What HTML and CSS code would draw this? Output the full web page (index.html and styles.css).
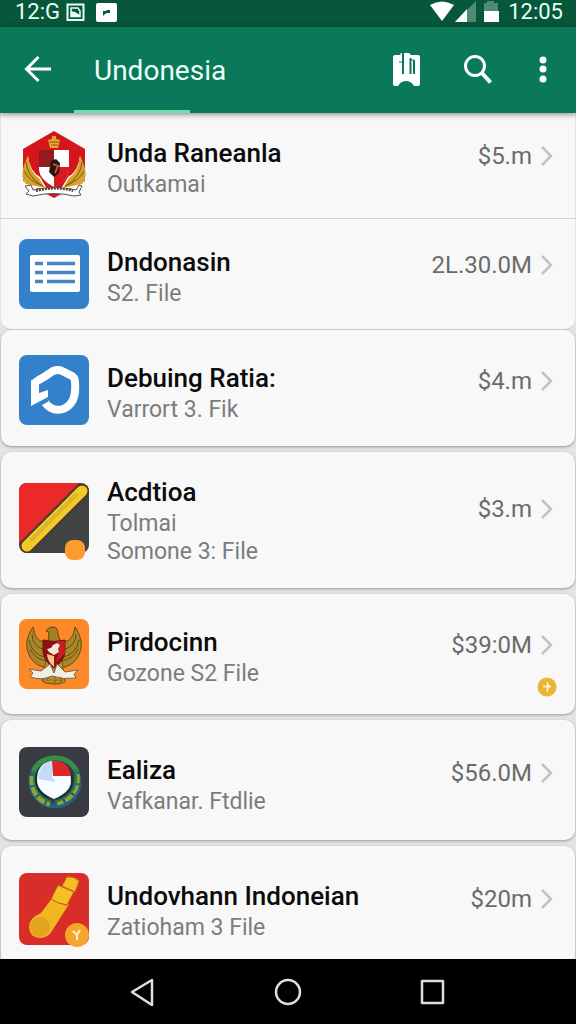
FILE: index.html
```html
<!DOCTYPE html>
<html lang="en">
<head>
    <meta charset="UTF-8">
    <meta name="viewport" content="width=device-width, initial-scale=1.0">
    <title>Undonesia</title>
    <link rel="stylesheet" href="styles.css">
</head>
<body>
    <div class="status-bar">
        <span>12:G</span>
        <svg class="note-icon" width="20" height="20" viewBox="0 0 20 20">
            <path d="M1.500 2.500h16v15.500h-16z" fill="none" stroke="#e9fff5" stroke-width="2"/>
            <path d="M5 14.500V6h7l2 3v5.500z" fill="none" stroke="#e9fff5" stroke-width="1.500"/>
            <path d="M5 9l4 1 5 3v2H5z" fill="#e9fff5"/>
        </svg>
        <svg width="22" height="20" viewBox="0 0 22 20">
            <rect x="0" y="1" width="21" height="19" rx="2" fill="#fff"/>
            <path d="M7 9h3l1-1h3v3h-3l-2 1-2 2z" fill="#07583c"/>
        </svg>
        <svg class="signal" width="70" height="21" viewBox="0 0 70 21">
            <path d="M0 4Q12-3 24 4L12 20z" fill="#fff"/>
            <path d="M46 0v21H25z" fill="#4d8b74"/>
            <path d="M37 8v13H25z" fill="#fff"/>
            <path d="M57 0h7v2h4v8H54V2h3z" fill="#4d8b74"/>
            <path d="M54 10h15v11H54z" fill="#fff"/>
        </svg>
        <span>12:05</span>
    </div>

    <header class="app-bar">
        <button class="icon-button" aria-label="Back">
            <svg width="28" height="28" viewBox="0 0 28 28" fill="none" stroke="#fff" stroke-width="3">
                <path d="M27 13H3M14.500 1L2.500 13l12 12"/>
            </svg>
        </button>
        <h1>Undonesia</h1>
        <button class="icon-button" aria-label="Guide">
            <svg width="28" height="34" viewBox="0 0 28 34">
                <path d="M0 4q0-2 2-2h5l1-2h8l2 2h7q2 0 2 2v27q0 2-2 2h-4q-3-5-8-5t-8 5H2q-2 0-2-2z" fill="#fff"/>
                <path d="M10 0v21M17.500 5v16M21 7v14" fill="none" stroke="#0a795a" stroke-width="2"/>
                <path d="M6 9h3M17 7h4" stroke="#0a795a" stroke-width="1"/>
            </svg>
        </button>
        <button class="icon-button" aria-label="Search">
            <svg width="30" height="30" viewBox="0 0 30 30" fill="none" stroke="#fff">
                <circle cx="12" cy="11" r="9.500" stroke-width="3"/>
                <path d="M18.500 17.500l9 10" stroke-width="4"/>
            </svg>
        </button>
        <button class="icon-button more" aria-label="More options">
            <svg width="8" height="28" viewBox="0 0 8 28" fill="#fff">
                <circle cx="4" cy="4" r="3.500"/>
                <circle cx="4" cy="13" r="3.500"/>
                <circle cx="4" cy="23" r="3.500"/>
            </svg>
        </button>
        <span class="tab-line"></span>
    </header>

    <main>
        <a class="row flat short" href="#">
            <svg class="logo" viewBox="0 0 70 70">
                <path d="M35 1l31 18v32L35 68 4 51V19z" fill="#d4151b"/>
                <path d="M9 26Q0 49 8 57l20 2-7-12Q11 42 9 26zM61 26q9 23 1 31l-20 2 7-12q10-5 12-21z" fill="#fff"/>
                <path d="M9 26Q-1 45 7 54l19 4-6-10Q11 43 9 26zM61 26q10 19 2 28l-19 4 6-10q9-5 11-22z" fill="#d7a22c"/>
                <path d="M7 32q1 14 15 23M5 41q5 10 19 15M63 32q-1 14-15 23M65 41q-5 10-19 15" fill="none" stroke="#775515"/>
                <path d="M33 6h4v3l4 1-2 8h-8l-2-8 4-1z" fill="#e4a932"/>
                <path d="M30 12h10M32 15h7" stroke="#8f5517"/>
                <path d="M20 20h30v20q-1 10-15 17-14-7-15-17z" fill="#fff"/>
                <path d="M20 20h15v17H20z" fill="#931b1d"/>
                <path d="M35 37h15v4q-2 10-15 16z" fill="#d31b20"/>
                <path d="M32 31l5-2 4 4-1 10-5 4-5-5z" fill="#27150f"/>
                <path d="M34 34l5 2-3 7" fill="none" stroke="#c74d2d" stroke-width="2"/>
                <path d="M12 55l2 5q22-5 43 0l3-5 3 1-3 6 2 3-7 1q-20-5-41 0l-7-2 3-3-4-5z" fill="#fff" stroke="#55514b"/>
                <path d="M17 61q20-5 37 0" fill="none" stroke="#4d4036" stroke-width="2" stroke-dasharray="2 1"/>
            </svg>
            <span class="text"><b>Unda Raneanla</b><small>Outkamai</small></span>
            <span class="price">$5.m</span>
            <svg class="chevron" viewBox="0 0 14 22"><path d="M2 2l9 9-9 9"/></svg>
        </a>

        <a class="row flat end" href="#">
            <svg class="logo" viewBox="0 0 70 70">
                <rect width="70" height="70" rx="8" fill="#3380cb"/>
                <rect x="11" y="16" width="50" height="37" rx="2" fill="#fff"/>
                <path d="M16 24.500h8M16 33.500h8M16 42.500h8M28 24.500h28M28 33.500h28M28 42.500h28" stroke="#4585c4" stroke-width="3.500"/>
            </svg>
            <span class="text"><b>Dndonasin</b><small>S2. File</small></span>
            <span class="price">2L.30.0M</span>
            <svg class="chevron" viewBox="0 0 14 22"><path d="M2 2l9 9-9 9"/></svg>
        </a>

        <a class="row medium" href="#">
            <svg class="logo" viewBox="0 0 70 70">
                <rect width="70" height="70" rx="8" fill="#3380cb"/>
                <path d="M16 44V28q0-1 9-6l9-6q5-2 9 0l10 5q3 2 3 6 1 11-2 18-4 7-10 9-7 2-12-1-4-2-7-7" fill="none" stroke="#fff" stroke-width="8"/>
                <path d="M12 25v26l17-9v-7l-9 3V28z" fill="#fff"/>
                <path d="M15 53l14-8" stroke="#3380cb" stroke-width="3"/>
            </svg>
            <span class="text"><b>Debuing Ratia:</b><small>Varrort 3. Fik</small></span>
            <span class="price">$4.m</span>
            <svg class="chevron" viewBox="0 0 14 22"><path d="M2 2l9 9-9 9"/></svg>
        </a>

        <a class="row three-line" href="#">
            <svg class="logo" viewBox="0 0 70 70">
                <rect width="70" height="70" rx="8" fill="#414244"/>
                <path d="M8 0h52L0 60V8q0-8 8-8z" fill="#ec2929"/>
                <path d="M8 63L63 8" stroke="#4b3820" stroke-width="14" stroke-linecap="round"/>
                <path d="M8 63L63 8" stroke="#f0cb27" stroke-width="11" stroke-linecap="round"/>
                <path d="M13 56L57 12" stroke="#deb335" stroke-width="4" stroke-linecap="round"/>
                <rect x="46" y="57" width="20" height="20" rx="8" fill="#fb9d2d"/>
            </svg>
            <span class="text"><b>Acdtioa</b><small>Tolmai</small><small>Somone 3: File</small></span>
            <span class="price">$3.m</span>
            <svg class="chevron" viewBox="0 0 14 22"><path d="M2 2l9 9-9 9"/></svg>
        </a>

        <a class="row" href="#">
            <svg class="logo" viewBox="0 0 70 70">
                <rect width="70" height="70" rx="8" fill="#fd8828"/>
                <path d="M14 8Q3 23 11 38q6 10 19 11l-5-26Q16 22 14 8zM56 8q11 15 3 30-6 10-19 11l5-26q9-1 11-15z" fill="#aa8726" stroke="#674b15"/>
                <path d="M13 15q0 13 14 16M10 21q2 14 18 18M11 30q5 11 18 12M57 15q0 13-14 16M60 21q-2 14-18 18M59 30q-5 11-18 12" fill="none" stroke="#604a19"/>
                <path d="M29 23l1-10-3-1q3-5 8-4 4 1 4 7l3 9z" fill="#a77c22" stroke="#604817"/>
                <path d="M27 42h16l3 21q-11 5-23-1z" fill="#c69023" stroke="#795516"/>
                <path d="M24 21q11 3 22 0v12q-1 9-11 16-10-7-11-16z" fill="#8f1115" stroke="#5d1511"/>
                <path d="M38 22h8v12l-9 9 3-10z" fill="#c91e20"/>
                <path d="M34 26l4-2 3 2-2 4 1 3-5 3-5-3-2-3 4-1z" fill="#f7e6d5"/>
                <path d="M28 35l7 2v11q-7-6-7-13z" fill="#f6c385"/>
                <path d="M31 45l-9 7-12-2 4 4-3 4q12 4 22-1 11 4 24 2l-2-4 4-4-13 2-8-8-3 9z" fill="#f1eee4" stroke="#75654c"/>
                <path d="M24 61h20M26 64h16M29 58v4M36 58v6M42 58v5" stroke="#77561a" stroke-dasharray="2 1"/>
            </svg>
            <span class="text"><b>Pirdocinn</b><small>Gozone S2 File</small></span>
            <span class="price">$39:0M</span>
            <svg class="chevron" viewBox="0 0 14 22"><path d="M2 2l9 9-9 9"/></svg>
            <svg class="badge" viewBox="0 0 20 20">
                <circle cx="10" cy="10" r="9.500" fill="#edb536"/>
                <path d="M6 9.500h8M10.500 5v10" fill="none" stroke="#fff7dc" stroke-width="1.500"/>
                <path d="M11 7l3 2.500-3 2" fill="#fff7dc"/>
            </svg>
        </a>

        <a class="row low" href="#">
            <svg class="logo" viewBox="0 0 70 70">
                <rect width="70" height="70" rx="8" fill="#383b42"/>
                <circle cx="36" cy="35" r="24" fill="none" stroke="#255f83" stroke-width="5"/>
                <path d="M14 25Q19 12 35 11t23 14" fill="none" stroke="#398d46" stroke-width="5"/>
                <path d="M13 29q-1 23 18 28M58 27q3 23-20 29" fill="none" stroke="#8aa72d" stroke-width="5" stroke-dasharray="9 2"/>
                <path d="M16 23q-5 23 16 32M56 22q6 25-20 33" fill="none" stroke="#247c52" stroke-width="2"/>
                <circle cx="35" cy="33" r="19" fill="#102e3b"/>
                <path d="M33 14q19 0 19 20 0 11-17 18-17-7-17-19 0-17 15-19z" fill="#f8fbff"/>
                <path d="M33 14v16l4 5-18-3q1-16 14-18z" fill="#c2dcf8"/>
                <path d="M33 14q17-1 19 15H34z" fill="#df242b"/>
            </svg>
            <span class="text"><b>Ealiza</b><small>Vafkanar. Ftdlie</small></span>
            <span class="price">$56.0M</span>
            <svg class="chevron" viewBox="0 0 14 22"><path d="M2 2l9 9-9 9"/></svg>
        </a>

        <a class="row low" href="#">
            <svg class="logo" viewBox="0 0 70 70">
                <rect width="70" height="72" rx="8" fill="#d92d29"/>
                <path d="M34 24l16 7-17 27q-4 7-12 7-11-1-11-11 0-9 12-14z" fill="#f2b622"/>
                <path d="M39 12l16 7-7 13q-9-1-16-6z" fill="#f8bf23" stroke="#a75e13"/>
                <path d="M43 13l5-9q7-1 12 4l-4 11z" fill="#f7bd22" stroke="#bd7719"/>
                <circle cx="21" cy="54" r="10" fill="#e3a51f"/>
                <circle cx="58" cy="62" r="12" fill="#f5a72d"/>
                <path d="M54 58l4 4 3-5M58 62v5" fill="none" stroke="#fff2c5" stroke-width="2"/>
            </svg>
            <span class="text"><b>Undovhann Indoneian</b><small>Zatioham 3 File</small></span>
            <span class="price">$20m</span>
            <svg class="chevron" viewBox="0 0 14 22"><path d="M2 2l9 9-9 9"/></svg>
        </a>
    </main>

    <nav>
        <button aria-label="Back">
            <svg width="28" height="28" viewBox="0 0 28 28"><path d="M23 2v25L3 14z"/></svg>
        </button>
        <button aria-label="Home">
            <svg width="28" height="28" viewBox="0 0 28 28"><circle cx="14" cy="14" r="12"/></svg>
        </button>
        <button aria-label="Recent apps">
            <svg width="28" height="28" viewBox="0 0 28 28"><path d="M3 3h21v22H3z"/></svg>
        </button>
    </nav>
</body>
</html>
```

FILE: styles.css
```css
* {
    box-sizing: border-box;
}

body {
    margin: 0;
    height: 100vh;
    display: flex;
    flex-direction: column;
    font-family: Roboto, "Liberation Sans", sans-serif;
    background: #e3e4e4;
}

button {
    padding: 0;
    border: none;
    background: none;
    cursor: pointer;
}

svg {
    display: block;
    flex: none;
}

/* top bars */
.status-bar {
    display: flex;
    align-items: center;
    flex: none;
    height: 27px;
    padding: 0 13px 4px 15px;
    background: #07573d;
    color: #e9fff5;
    font-size: 22px;
    line-height: 23px;
}

.note-icon {
    margin: 0 10px 0 6px;
}

.signal {
    margin-left: auto;
    margin-right: 8px;
}

.app-bar {
    position: relative;
    z-index: 1;
    display: flex;
    align-items: center;
    flex: none;
    height: 86px;
    padding: 0 29px 0 24px;
    background: #0a795a;
    box-shadow: 0 1px 6px rgba(0, 0, 0, 0.5);
}

.app-bar h1 {
    flex: 1;
    margin: 0 0 0 42px;
    color: #e9fff5;
    font-size: 28px;
    font-weight: 400;
}

.app-bar .icon-button + .icon-button {
    margin-left: 42px;
}

.app-bar .icon-button + .more {
    margin-left: 46px;
}

.tab-line {
    position: absolute;
    left: 74px;
    bottom: 0;
    width: 116px;
    height: 3px;
    background: #70dfb0;
}

/* list */
main {
    flex: 1;
    min-height: 0;
    overflow: auto;
    scrollbar-width: none;
    padding: 0 1px;
}

.row {
    position: relative;
    display: flex;
    align-items: center;
    margin-bottom: 6px;
    padding: 25px 21px 25px 18px;
    border-radius: 10px;
    background: #f8f8f8;
    box-shadow: 0 1px 3px rgba(0, 0, 0, 0.35);
    text-decoration: none;
}

.row.short {
    padding-top: 17px;
    padding-bottom: 18px;
}

.row.medium {
    padding-top: 25px;
    padding-bottom: 21px;
}

.row.three-line {
    padding-top: 18px;
    padding-bottom: 22px;
}

.row.low {
    padding-top: 27px;
    padding-bottom: 23px;
}

.row.flat {
    margin-bottom: 1px;
    border-radius: 0;
    box-shadow: 0 1px 1px rgba(0, 0, 0, 0.08);
}

.row.end {
    padding-top: 20px;
    padding-bottom: 20px;
    border-radius: 0 0 10px 10px;
}

.logo {
    width: 70px;
    height: 70px;
    overflow: visible;
}

.text {
    flex: 1;
    margin-left: 18px;
    padding-top: 4px;
}

.text b {
    display: block;
    color: #0b0b0b;
    font-size: 26px;
    font-weight: 500;
    line-height: 36px;
}

.text small {
    display: block;
    color: #7c7c7c;
    font-size: 23px;
    line-height: 28px;
}

.price {
    padding-bottom: 18px;
    color: #6b6b6b;
    font-size: 24px;
    line-height: 30px;
}

.chevron {
    width: 14px;
    height: 22px;
    margin: 0 0 18px 8px;
    fill: none;
    stroke: #c2c2c2;
    stroke-width: 2.5;
}

.badge {
    position: absolute;
    right: 18px;
    bottom: 17px;
    width: 20px;
    height: 20px;
}

/* system navigation */
nav {
    display: flex;
    justify-content: center;
    align-items: center;
    gap: 117px;
    flex: none;
    height: 65px;
    background: #000;
}

nav svg {
    fill: none;
    stroke: #dedede;
    stroke-width: 2.5;
    stroke-linejoin: round;
}
```
